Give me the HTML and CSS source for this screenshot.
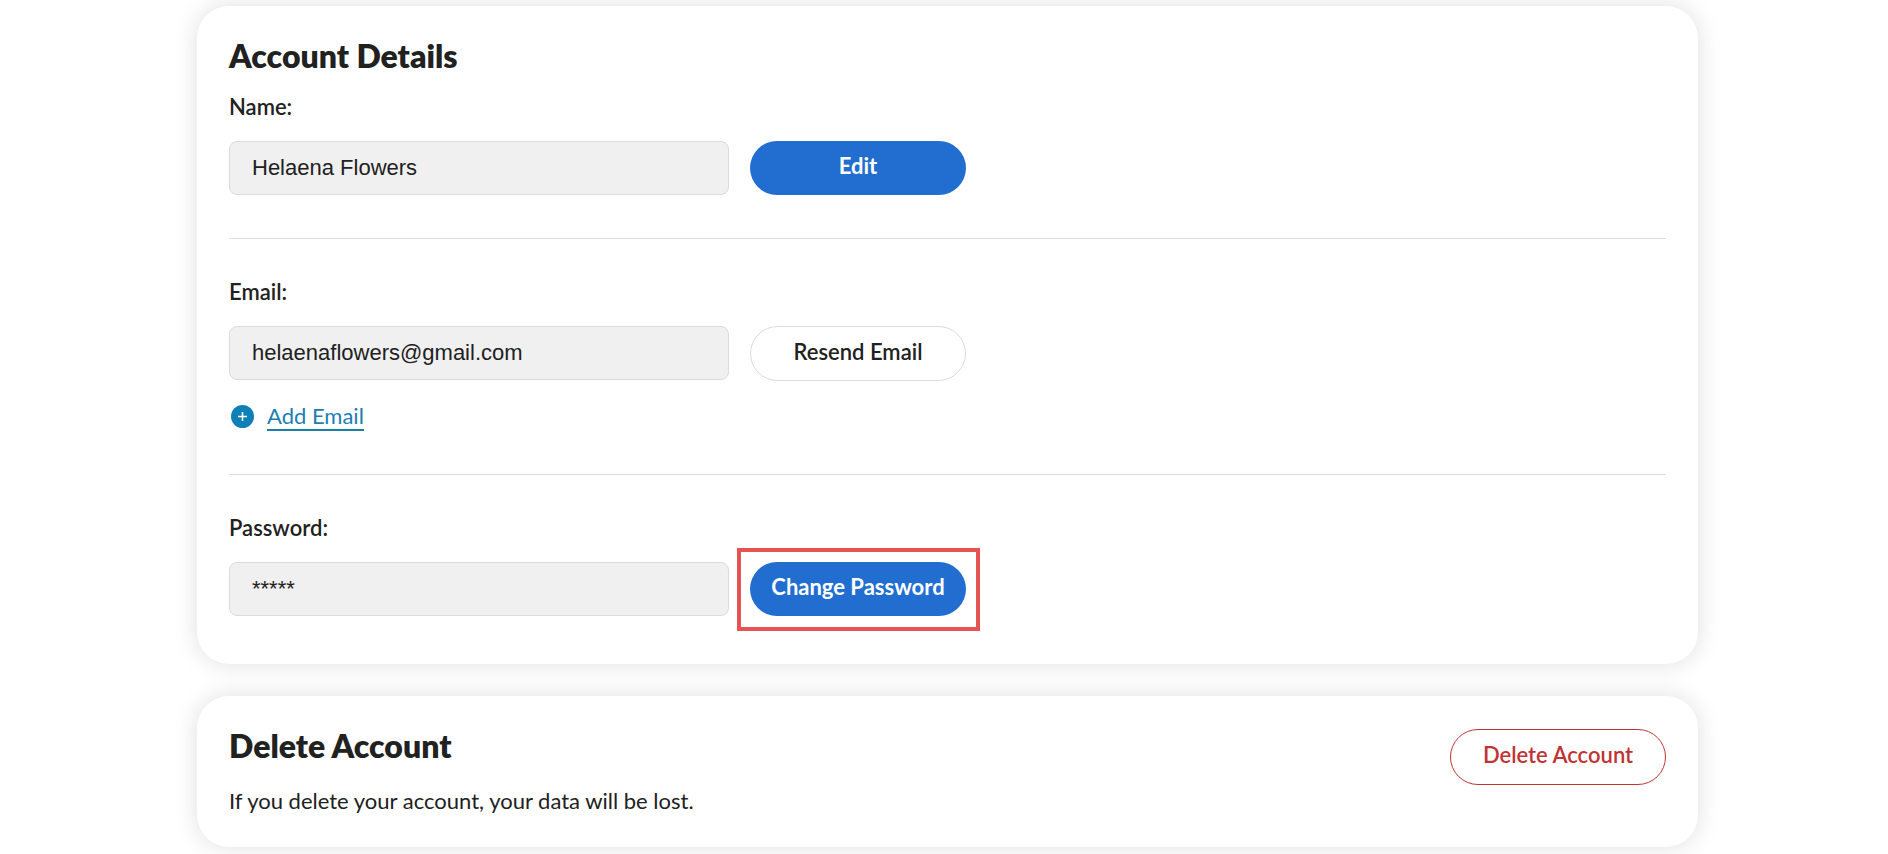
FILE: index.html
```html
<!DOCTYPE html>
<html lang="en">
<head>
<meta charset="utf-8">
<title>Account Details</title>
<meta name="viewport" content="width=device-width, initial-scale=1">
<link rel="stylesheet" href="styles.css">
</head>
<body>
<main class="page">
  <section class="card">
    <h1 class="card-title">Account Details</h1>
    <form class="details">
      <div class="field">
        <label class="label" for="name">Name:</label>
        <div class="row">
          <input class="input" id="name" type="text" value="Helaena Flowers" readonly>
          <button class="button primary" type="button">Edit</button>
        </div>
      </div>
      <div class="field">
        <label class="label" for="email">Email:</label>
        <div class="row">
          <input class="input" id="email" type="email" value="helaenaflowers@gmail.com" readonly>
          <button class="button outline" type="button">Resend Email</button>
        </div>
        <div class="add-row">
          <svg class="add-icon" viewBox="0 0 23 23" aria-hidden="true">
            <circle cx="11.5" cy="11.5" r="11.5" fill="#0f7fb8"/>
            <path d="M11.5 7v9M7 11.5h9" fill="none" stroke="#fff" stroke-width="1.5"/>
          </svg>
          <a class="link" href="#add-email">Add Email</a>
        </div>
      </div>
      <div class="field">
        <label class="label" for="password">Password:</label>
        <div class="row">
          <input class="input" id="password" type="text" value="*****" readonly>
          <button class="button primary highlighted" type="button">Change Password</button>
        </div>
      </div>
    </form>
  </section>
  <section class="card delete-card">
    <div>
      <h2 class="card-title">Delete Account</h2>
      <p class="note">If you delete your account, your data will be lost.</p>
    </div>
    <button class="button danger" type="button">Delete Account</button>
  </section>
</main>
</body>
</html>
```
FILE: styles.css
```css
* {
  box-sizing: border-box;
}

body {
  margin: 0;
  background: #fff;
  color: #212121;
  font: 400 22px/28px Lato, "Open Sans", sans-serif;
}

.page {
  display: flex;
  flex-direction: column;
  gap: 32px;
  padding: 6px 190px 7px 197px;
}

.card {
  padding: 33px 32px 32px;
  border-radius: 32px;
  background: #fff;
  box-shadow: 0 0 24px rgba(0, 0, 0, 0.13);
}

.card-title {
  margin: 0;
  font-size: 32px;
  font-weight: 800;
  line-height: 34px;
}

.details {
  padding: 20px 0 16px;
}

.field + .field {
  margin-top: 43px;
  padding-top: 39px;
  border-top: 1px solid #dcdddd;
}

.label {
  display: block;
  margin-bottom: 20px;
  font-weight: 600;
}

.row {
  display: flex;
  flex-wrap: wrap;
  align-items: flex-start;
  gap: 21px;
}

.input {
  width: 500px;
  max-width: 100%;
  height: 54px;
  padding: 0 22px;
  border: 1px solid #dadbdb;
  border-radius: 8px;
  background: #f0f0f0;
  color: #212121;
  font: 22px "Liberation Sans", Arial, sans-serif;
}

.button {
  position: relative;
  flex: none;
  width: 216px;
  height: 54px;
  padding: 0 0 4px;
  border: 0;
  border-radius: 28px;
  background: #fff;
  color: #212121;
  font: 600 22px/28px Lato, "Open Sans", sans-serif;
  white-space: nowrap;
  cursor: pointer;
}

.primary {
  background: #216ed0;
  color: #fff;
  font-weight: 700;
}

.outline {
  height: 55px;
  border: 1px solid #dadbdb;
}

.danger {
  height: 56px;
  border: 1px solid #bf3434;
  color: #bf3434;
}

.highlighted::after {
  content: "";
  position: absolute;
  inset: -14px -14px -15px -13px;
  border: 4px solid #e65353;
}

.add-row {
  display: flex;
  align-items: center;
  gap: 13px;
  margin-top: 21px;
  padding-left: 2px;
}

.add-icon {
  width: 23px;
  height: 23px;
}

.link {
  border-bottom: 2px solid #1b7eaa;
  color: #1b7eb3;
  line-height: 27px;
  text-decoration: none;
}

.delete-card {
  display: flex;
  align-items: flex-start;
  justify-content: space-between;
  gap: 32px;
}

.note {
  margin: 24px 0 0;
}
```
